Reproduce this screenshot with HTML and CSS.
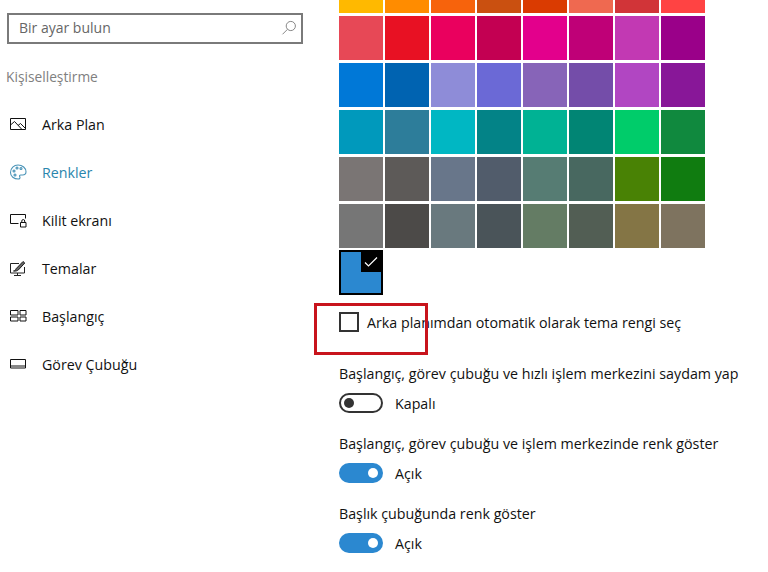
FILE: index.html
```html
<!DOCTYPE html>
<html lang="tr">
<head>
    <meta charset="UTF-8">
    <meta name="viewport" content="width=device-width, initial-scale=1.0">
    <title>Renkler</title>
    <link rel="stylesheet" href="styles.css">
</head>
<body>
    <div class="container">
        <div class="sidebar">
            <div class="search">
                <span>Bir ayar bulun</span>
                <svg width="16" height="16" viewBox="0 0 16 16" fill="none" stroke="#888" stroke-width="1"><circle cx="9.800" cy="6" r="4.600"/><path d="M6.500 9.300L1.500 14.300"/></svg>
            </div>
            <div class="section-title">Kişiselleştirme</div>
            <div class="nav-item">
                <svg width="18" height="18" viewBox="0 0 18 18" fill="none" stroke="#111" stroke-width="1"><path d="M2.500 3.500h15v11h-15z" transform="translate(-1 0)"/><path d="M1.500 10l4-3.500 7.500 8M9 10.500l2.500-2 5 5"/></svg>
                <span>Arka Plan</span>
            </div>
            <div class="nav-item active">
                <svg width="18" height="18" viewBox="0 0 18 18" fill="none" stroke="#4a94b8" stroke-width="1.100"><path d="M9 2c4.500 0 8 3 8 6.800 0 2.200-1.700 3.200-3.400 3.200h-1.800c-1.200 0-1.600 1-1 1.900.6 1-.2 2.100-1.500 2.100C5 16 1.500 13.500 1.500 9.500 1.500 5 5 2 9 2z"/><circle cx="5" cy="8" r="1"/><circle cx="8" cy="5" r="1"/><circle cx="12" cy="5.500" r="1"/><circle cx="6" cy="12" r="1"/></svg>
                <span>Renkler</span>
            </div>
            <div class="nav-item">
                <svg width="18" height="18" viewBox="0 0 18 18" fill="none" stroke="#111" stroke-width="1"><path d="M9.500 12.500h-8v-9h15v4"/><path d="M11.500 11.500h5.500v4.500h-5.500zM12.800 11.500V10a1.450 1.450 0 0 1 2.900 0v1.500"/></svg>
                <span>Kilit ekranı</span>
            </div>
            <div class="nav-item">
                <svg width="18" height="18" viewBox="0 0 18 18" fill="none" stroke="#222" stroke-width="1"><path d="M10 4.500H1.500v9.500h14V8"/><path d="M8.500 14v2.500M5 16.500h7"/><path d="M4.500 12c1.500 0 2-1.200 2.500-2.200L14 2.500l1.800 1.500-6.500 7c-1 .9-3 1.300-4.800 1z" fill="#666"/></svg>
                <span>Temalar</span>
            </div>
            <div class="nav-item">
                <svg width="18" height="18" viewBox="0 0 18 18" fill="none" stroke="#111" stroke-width="1"><path d="M1.500 3.500h7.500v4.500H1.500zM11 3.500h6v4.500h-6zM1.500 10h7.500v4h-7.500zM11 10h6v4h-6z"/></svg>
                <span>Başlangıç</span>
            </div>
            <div class="nav-item">
                <svg width="18" height="18" viewBox="0 0 18 18" fill="none" stroke="#111" stroke-width="1"><path d="M1.500 4.500h15v8.500h-15zM1.500 11h15"/></svg>
                <span>Görev Çubuğu</span>
            </div>
        </div>

        <div class="main">
            <div class="swatches">
                <div class="swatch cut" style="background:#ffb900"></div>
                <div class="swatch cut" style="background:#ff8c00"></div>
                <div class="swatch cut" style="background:#f7630c"></div>
                <div class="swatch cut" style="background:#ca5010"></div>
                <div class="swatch cut" style="background:#da3b01"></div>
                <div class="swatch cut" style="background:#ef6950"></div>
                <div class="swatch cut" style="background:#d13438"></div>
                <div class="swatch cut" style="background:#ff4343"></div>

                <div class="swatch" style="background:#e74856"></div>
                <div class="swatch" style="background:#e81123"></div>
                <div class="swatch" style="background:#ea005e"></div>
                <div class="swatch" style="background:#c30052"></div>
                <div class="swatch" style="background:#e3008c"></div>
                <div class="swatch" style="background:#bf0077"></div>
                <div class="swatch" style="background:#c239b3"></div>
                <div class="swatch" style="background:#9a0089"></div>

                <div class="swatch" style="background:#0078d7"></div>
                <div class="swatch" style="background:#0063b1"></div>
                <div class="swatch" style="background:#8e8cd8"></div>
                <div class="swatch" style="background:#6b69d6"></div>
                <div class="swatch" style="background:#8764b8"></div>
                <div class="swatch" style="background:#744da9"></div>
                <div class="swatch" style="background:#b146c2"></div>
                <div class="swatch" style="background:#881798"></div>

                <div class="swatch" style="background:#0099bc"></div>
                <div class="swatch" style="background:#2d7d9a"></div>
                <div class="swatch" style="background:#00b7c3"></div>
                <div class="swatch" style="background:#038387"></div>
                <div class="swatch" style="background:#00b294"></div>
                <div class="swatch" style="background:#018574"></div>
                <div class="swatch" style="background:#00cc6a"></div>
                <div class="swatch" style="background:#10893e"></div>

                <div class="swatch" style="background:#7a7574"></div>
                <div class="swatch" style="background:#5d5a58"></div>
                <div class="swatch" style="background:#68768a"></div>
                <div class="swatch" style="background:#515c6b"></div>
                <div class="swatch" style="background:#567c73"></div>
                <div class="swatch" style="background:#486860"></div>
                <div class="swatch" style="background:#498205"></div>
                <div class="swatch" style="background:#107c10"></div>

                <div class="swatch" style="background:#767676"></div>
                <div class="swatch" style="background:#4c4a48"></div>
                <div class="swatch" style="background:#69797e"></div>
                <div class="swatch" style="background:#4a5459"></div>
                <div class="swatch" style="background:#647c64"></div>
                <div class="swatch" style="background:#525e54"></div>
                <div class="swatch" style="background:#847545"></div>
                <div class="swatch" style="background:#7e735f"></div>
            </div>

            <div class="selected">
                <div class="selected-mark">
                    <svg width="14" height="12" viewBox="0 0 14 12" fill="none" stroke="#fff" stroke-width="1.200"><path d="M1 6.500l3.500 3.500L13 1.500"/></svg>
                </div>
            </div>

            <div class="check-row">
                <div class="checkbox"></div>
                <span>Arka planımdan otomatik olarak tema rengi seç</span>
            </div>

            <div class="option first">Başlangıç, görev çubuğu ve hızlı işlem merkezini saydam yap</div>
            <div class="toggle-row">
                <div class="toggle off"><div class="knob"></div></div>
                <span>Kapalı</span>
            </div>

            <div class="option">Başlangıç, görev çubuğu ve işlem merkezinde renk göster</div>
            <div class="toggle-row">
                <div class="toggle on"><div class="knob"></div></div>
                <span>Açık</span>
            </div>

            <div class="option">Başlık çubuğunda renk göster</div>
            <div class="toggle-row">
                <div class="toggle on"><div class="knob"></div></div>
                <span>Açık</span>
            </div>
        </div>
    </div>
    <div class="red-box"></div>
</body>
</html>
```

FILE: styles.css
```css
body {
    font-family: "Open Sans", "Noto Sans", sans-serif;
    font-size: 14.25px;
    color: #1a1a1a;
    background: #fff;
    margin: 0;
    height: 572px;
    overflow: hidden;
}
.container {
    display: flex;
}
.sidebar {
    width: 339px;
    box-sizing: border-box;
    padding: 13px 0 0 7px;
    flex-shrink: 0;
}
.search {
    display: flex;
    align-items: center;
    justify-content: space-between;
    width: 296px;
    height: 31px;
    box-sizing: border-box;
    border: 2px solid #7a7a7a;
    padding: 0 4px 2px 10px;
    font-size: 14px;
    color: #666;
}
.section-title {
    margin: 21px 0 0 -1px;
    line-height: 24px;
    font-size: 13.75px;
    color: #808080;
}
.nav-item {
    display: flex;
    align-items: center;
    height: 48px;
    padding-left: 2px;
    color: #111;
}
.section-title + .nav-item {
    margin-top: 11px;
}
.nav-item svg {
    flex-shrink: 0;
    margin-right: 15px;
}
.nav-item.active {
    color: #2a86ad;
}
.main {
    flex: 1;
}
.swatches {
    display: grid;
    grid-template-columns: repeat(8, 44px);
    column-gap: 2px;
    row-gap: 3px;
}
.swatch {
    height: 44px;
}
.swatch.cut {
    height: 13px;
}
.selected {
    width: 44px;
    height: 45px;
    margin-top: 2px;
    box-sizing: border-box;
    border: 2px solid #000;
    background: #2b88d0;
    position: relative;
}
.selected-mark {
    position: absolute;
    top: 0;
    right: 0;
    width: 20px;
    height: 20px;
    background: #000;
    display: flex;
    align-items: center;
    justify-content: center;
}
.check-row {
    display: flex;
    align-items: center;
    margin-top: 17px;
    height: 20px;
    color: #111;
}
.checkbox {
    width: 20px;
    height: 20px;
    box-sizing: border-box;
    border: 2px solid #333;
    margin-right: 8px;
}
.option {
    margin-top: 21px;
    line-height: 20px;
    color: #111;
}
.option.first {
    margin-top: 32px;
}
.toggle-row {
    display: flex;
    align-items: center;
    margin-top: 9px;
    height: 20px;
    color: #111;
}
.toggle {
    width: 44px;
    height: 20px;
    box-sizing: border-box;
    border-radius: 10px;
    margin-right: 12px;
    display: flex;
    align-items: center;
    padding: 0 5px;
}
.toggle.off {
    border: 2px solid #333;
    padding: 0 3px;
}
.toggle.on {
    background: #2b88d0;
    justify-content: flex-end;
}
.knob {
    width: 10px;
    height: 10px;
    border-radius: 50%;
    background: #333;
}
.toggle.on .knob {
    background: #fff;
}
.red-box {
    position: absolute;
    left: 314px;
    top: 303px;
    width: 114px;
    height: 52px;
    box-sizing: border-box;
    border: 3px solid #c8141c;
}
```
